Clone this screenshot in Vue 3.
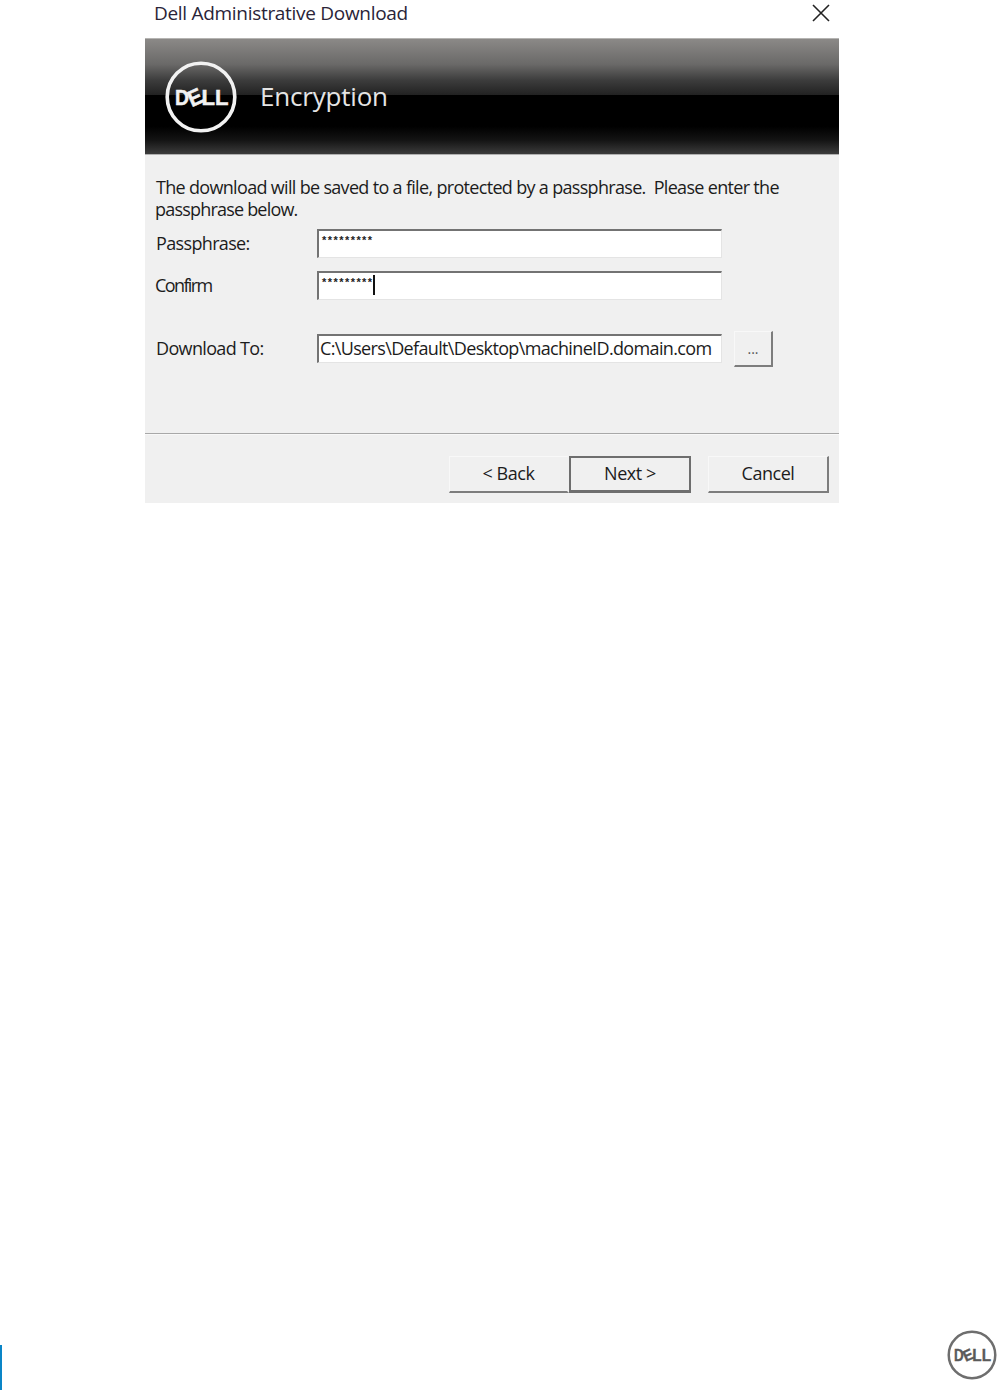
<script setup>
const fields = [
  { label: 'Passphrase:', value: '*********' },
  { label: 'Confirm', value: '*********', caret: true, nudge: true },
]
const actions = [
  { text: '< Back', cls: 'back' },
  { text: 'Next >', cls: 'next' },
  { text: 'Cancel', cls: 'cancel' },
]
</script>

<template>
  <div class="page">
    <section class="dialog">
      <div class="titlebar">
        <span class="title">Dell Administrative Download</span>
        <svg class="close" width="18" height="18" viewBox="0 0 18 18">
          <path d="M1 1 L17 17 M17 1 L1 17" stroke="#222" stroke-width="1.6" fill="none" />
        </svg>
      </div>
      <header class="banner">
        <svg class="logo" width="72" height="72" viewBox="0 0 72 72">
          <circle cx="36" cy="36" r="33.8" fill="none" stroke="#f2f2f2" stroke-width="3.6" />
          <g fill="#f2f2f2" stroke="#f2f2f2" stroke-width="0.5" font-family="'Liberation Sans', sans-serif" font-weight="700" font-size="22.5">
            <text x="10" y="44" textLength="14" lengthAdjust="spacingAndGlyphs">D</text>
            <text x="23" y="44" textLength="14" lengthAdjust="spacingAndGlyphs" transform="rotate(-24 30 36)">E</text>
            <text x="36.5" y="44" textLength="27" lengthAdjust="spacingAndGlyphs">LL</text>
          </g>
        </svg>
        <h1 class="heading">Encryption</h1>
      </header>
      <div class="body">
        <p class="intro">The download will be saved to a file, protected by a passphrase.&#160; Please enter the<br /><span class="second">passphrase below.</span></p>
        <div class="form">
          <div v-for="f in fields" :key="f.label" class="row">
            <label class="label" :class="{ nudge: f.nudge }">{{ f.label }}</label>
            <div class="input">
              <span class="mask">{{ f.value }}</span><i v-if="f.caret" class="caret"></i>
            </div>
          </div>
          <div class="row path-row">
            <label class="label">Download To:</label>
            <div class="input path">C:\Users\Default\Desktop\machineID.domain.com</div>
            <button class="browse">...</button>
          </div>
        </div>
        <div class="actions">
          <button v-for="a in actions" :key="a.text" class="action" :class="a.cls">{{ a.text }}</button>
        </div>
      </div>
    </section>
    <footer class="pagefoot">
      <span class="bluebar"></span>
      <svg class="footlogo" width="50" height="50" viewBox="0 0 72 72">
        <circle cx="36" cy="36" r="33.5" fill="none" stroke="#6e6e6e" stroke-width="3.6" />
        <g fill="#5a5a5a" stroke="#5a5a5a" stroke-width="0.5" font-family="'Liberation Sans', sans-serif" font-weight="700" font-size="22.5">
          <text x="10" y="44" textLength="14" lengthAdjust="spacingAndGlyphs">D</text>
          <text x="23" y="44" textLength="14" lengthAdjust="spacingAndGlyphs" transform="rotate(-24 30 36)">E</text>
          <text x="36.5" y="44" textLength="27" lengthAdjust="spacingAndGlyphs">LL</text>
        </g>
      </svg>
    </footer>
  </div>
</template>

<style>
html, body { margin: 0; background: #fff; }
</style>

<style scoped>
.page {
  width: 997px;
  height: 1391px;
  display: flex;
  flex-direction: column;
  justify-content: space-between;
  background: #fff;
  font-family: "Open Sans", "Noto Sans", sans-serif;
  color: #1c1c1c;
  overflow: hidden;
}
.dialog {
  width: 694px;
  margin-left: 145px;
}
.titlebar {
  height: 38px;
  display: flex;
  justify-content: space-between;
  padding: 3px 9px 0 9px;
  box-sizing: border-box;
}
.title {
  font-size: 19px;
  line-height: 20px;
  letter-spacing: -0.3px;
  color: #2a2438;
}
.close { margin-top: 1px; }
.banner {
  height: 117px;
  box-sizing: border-box;
  display: flex;
  align-items: center;
  gap: 23px;
  padding: 0 0 0 20px;
  border-top: 1px solid #b5b4b2;
  border-bottom: 1px solid #b0b0b0;
  background: linear-gradient(#8b8987 0, #6a6968 22%, #3c3c3c 36%, #222 48.5%, #000 49%, #000 76%, #141414 88%, #3c3c3c 100%);
}
.heading {
  margin: -2px 0 0;
  font-size: 26px;
  font-weight: 400;
  color: #e4e4e4;
  letter-spacing: -0.2px;
}
.body {
  height: 348px;
  background: #f0f0f0;
  padding-top: 21px;
  box-sizing: border-box;
  position: relative;
}
.intro {
  margin: 0 0 0 11px;
  font-size: 18px;
  line-height: 22px;
  letter-spacing: -0.68px;
  white-space: pre;
}
.second { margin-left: -1px; letter-spacing: -0.8px; }
.form {
  margin-top: 9px;
  display: flex;
  flex-direction: column;
  gap: 12px;
  padding-left: 11px;
}
.row {
  display: flex;
  align-items: center;
  height: 30px;
}
.path-row {
  margin-top: 18px;
  height: 36px;
}
.label {
  width: 161px;
  flex: none;
  font-size: 18px;
  letter-spacing: -0.65px;
  margin-top: -2px;
}
.label.nudge { margin-left: -1px; width: 162px; letter-spacing: -1.6px; }
.input {
  width: 405px;
  height: 29px;
  align-self: flex-start;
  box-sizing: border-box;
  background: #fff;
  border-top: 2px solid #737373;
  border-left: 2px solid #737373;
  border-right: 1px solid #e4e4e4;
  border-bottom: 1px solid #e4e4e4;
  display: flex;
  align-items: flex-start;
  padding-left: 3px;
}
.mask {
  font-size: 11px;
  line-height: 14px;
  letter-spacing: 1.45px;
  font-weight: 700;
  font-family: "Liberation Sans", sans-serif;
  color: #222;
  margin-top: 2px;
}
.caret {
  width: 2px;
  height: 20px;
  background: #111;
  margin-left: -1px;
  margin-top: 2px;
}
.path {
  margin-top: 3px;
  font-size: 18px;
  line-height: 25px;
  letter-spacing: -0.65px;
  padding-left: 1px;
  white-space: nowrap;
  color: #1c1c1c;
}
.browse {
  width: 39px;
  height: 36px;
  margin-left: 12px;
  padding: 0;
  background: #f0f0f0;
  box-sizing: border-box;
  border-style: solid;
  border-width: 1px 2px 2px 1px;
  border-color: #f8f8f8 #7d7d7d #7d7d7d #f8f8f8;
  font-family: inherit;
  font-size: 14px;
  color: #555;
}
.actions {
  position: absolute;
  left: 0;
  right: 0;
  top: 278px;
  height: 70px;
  box-sizing: border-box;
  border-top: 1px solid #a8a8a8;
  box-shadow: inset 0 1px 0 #f8f8f8;
  padding: 22px 0 0 304px;
  display: flex;
  background: #f0f0f0;
}
.action {
  height: 37px;
  box-sizing: border-box;
  background: #f0f0f0;
  border-style: solid;
  border-width: 1px 2px 2px 1px;
  border-color: #f8f8f8 #7d7d7d #7d7d7d #f8f8f8;
  font-family: inherit;
  font-size: 18px;
  letter-spacing: -0.45px;
  color: #1c1c1c;
  padding: 0 0 2px;
}
.back { width: 120px; border-right-color: #f0f0f0; }
.next {
  width: 122px;
  border: 2px solid #6e6e6e;
  border-bottom-width: 3px;
}
.cancel { width: 121px; margin-left: 17px; }
.pagefoot {
  display: flex;
  justify-content: space-between;
  align-items: flex-end;
  height: 61px;
}
.bluebar {
  width: 2px;
  height: 45px;
  margin-bottom: 1px;
  background: #0a85c7;
}
.footlogo { margin-bottom: 11px; }
</style>
